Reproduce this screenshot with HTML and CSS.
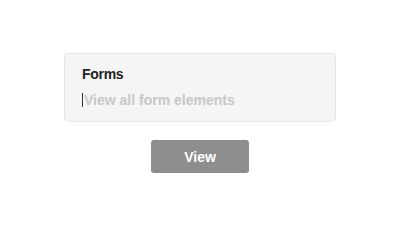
FILE: index.html
```html
<!DOCTYPE html>
<html>
<head>
<meta charset="utf-8">
<link rel="stylesheet" href="styles.css">
</head>
<body>
<div class="page">
  <div class="card">
    <div class="title">Forms</div>
    <div class="field"><span class="caret"></span><span class="placeholder">View all form elements</span></div>
  </div>
  <button class="btn">View</button>
</div>
</body>
</html>
```
FILE: styles.css
```css
html, body {
  margin: 0;
  padding: 0;
  background: #ffffff;
}
body {
  font-family: "Liberation Sans", Arial, Helvetica, sans-serif;
}
.page {
  display: flex;
  flex-direction: column;
  align-items: center;
  padding-top: 53px;
}
.card {
  box-sizing: border-box;
  width: 272px;
  background: #f5f5f5;
  border: 1px solid #e6e6e6;
  border-radius: 4px;
  padding: 12px 17px 12px 17px;
}
.title {
  font-size: 14px;
  line-height: 16px;
  font-weight: bold;
  letter-spacing: -0.3px;
  color: #222222;
}
.field {
  margin-top: 9px;
  display: flex;
  align-items: center;
  height: 18px;
}
.caret {
  width: 1px;
  height: 14px;
  background: #333333;
  margin-right: 1px;
}
.placeholder {
  font-size: 14px;
  line-height: 18px;
  font-weight: bold;
  color: #c8c8c8;
}
.btn {
  margin-top: 18px;
  width: 98px;
  height: 33px;
  border: none;
  border-radius: 3px;
  background: #8e8e8e;
  color: #ffffff;
  font-family: "Liberation Sans", Arial, Helvetica, sans-serif;
  font-size: 14px;
  font-weight: bold;
  padding: 0;
}
```
